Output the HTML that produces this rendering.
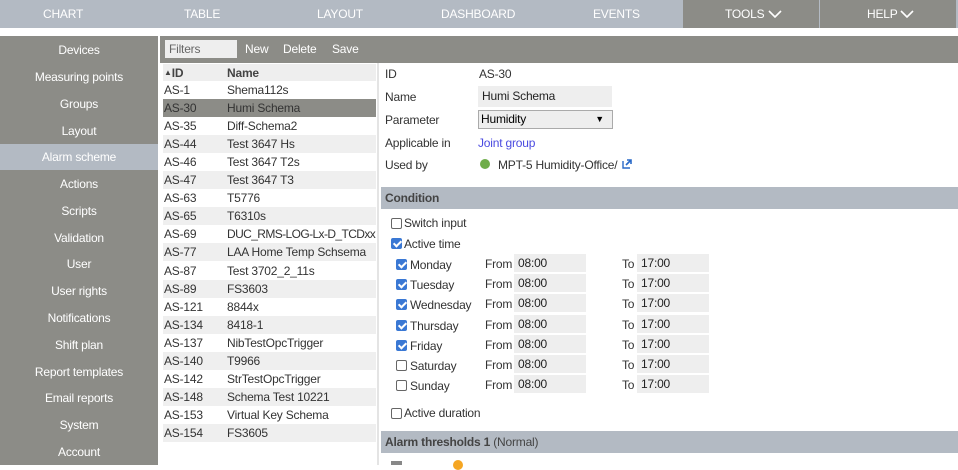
<!DOCTYPE html>
<html><head><meta charset="utf-8"><style>
*{margin:0;padding:0;box-sizing:border-box}
body{width:958px;height:465px;overflow:hidden;background:#fff;font-family:"Liberation Sans",sans-serif;font-size:12px;color:#333;position:relative;letter-spacing:-0.2px}
.a{position:absolute;white-space:nowrap}
.nav{left:0;top:0;width:958px;height:28px;background:#b3bac3}
.nav span{position:absolute;top:7px;color:#fff;font-size:12px}
.side{left:0;top:36px;width:158px;height:429px;background:#8c8c87}
.side div{position:absolute;left:0;width:158px;text-align:center;color:#fff;font-size:12px;height:26px;line-height:26px}
.tb{left:160px;top:36px;width:798px;height:27px;background:#8c8c87}
.row{position:absolute;left:163px;width:213px;height:18px;line-height:18px;white-space:nowrap;overflow:hidden}
.row span{position:absolute;white-space:nowrap}
.hdr{background:#b3bac3;font-weight:bold;color:#444;height:22px;line-height:22px;padding-left:4px}
.cb{position:absolute;width:11px;height:11px;border:1px solid #666;border-radius:2px;background:#fff}
.cb.on{background:#3a78d4;border-color:#3a78d4}
.cb.on:after{content:"";position:absolute;left:3px;top:0px;width:3px;height:6px;border:solid #fff;border-width:0 2px 2px 0;transform:rotate(45deg)}
.inp{position:absolute;background:#eee;height:18px;line-height:18px;padding-left:4px;color:#222}
</style></head><body>
<div class="a nav">
<span style="left:43px">CHART</span><span style="left:184px">TABLE</span><span style="left:317px">LAYOUT</span><span style="left:441px">DASHBOARD</span><span style="left:593px">EVENTS</span>
<div style="position:absolute;left:683px;top:0;width:136px;height:28px;background:#8c8c87"></div>
<div style="position:absolute;left:820px;top:0;width:136px;height:28px;background:#8c8c87"></div>
<span style="left:725px">TOOLS <svg width="14" height="8" viewBox="0 0 14 8"><path d="M1 1L7 7L13 1" stroke="#fff" stroke-width="1.6" fill="none"/></svg></span>
<span style="left:867px">HELP <svg width="14" height="8" viewBox="0 0 14 8"><path d="M1 1L7 7L13 1" stroke="#fff" stroke-width="1.6" fill="none"/></svg></span>
</div>
<div class="a side">
<div style="top:1px">Devices</div><div style="top:28px">Measuring points</div><div style="top:55px">Groups</div><div style="top:82px">Layout</div>
<div style="top:108px;background:#b3bac3">Alarm scheme</div><div style="top:135px">Actions</div><div style="top:162px">Scripts</div><div style="top:189px">Validation</div>
<div style="top:215px">User</div><div style="top:242px">User rights</div><div style="top:269px">Notifications</div><div style="top:296px">Shift plan</div>
<div style="top:323px">Report templates</div><div style="top:349px">Email reports</div><div style="top:376px">System</div><div style="top:403px">Account</div>
</div>
<div class="a tb">
<div style="position:absolute;left:5px;top:4px;width:72px;height:18px;background:#eee;color:#666;padding-left:4px;line-height:18px">Filters</div>
<span style="position:absolute;left:85px;top:6px;color:#fff">New</span><span style="position:absolute;left:123px;top:6px;color:#fff">Delete</span><span style="position:absolute;left:172px;top:6px;color:#fff">Save</span>
</div>
<div class="row" style="top:64px;background:#eee;font-weight:bold;color:#444"><span style="left:1px"><span style="position:static;font-size:8px;vertical-align:2px">▲</span>ID</span><span style="left:64px">Name</span></div>
<div id="list"></div>
<div class="a" style="left:377px;top:63px;width:2px;height:402px;background:#e4e4e4"></div>
<div class="a" style="left:385px;top:67px">ID</div><div class="a" style="left:479px;top:67px">AS-30</div>
<div class="a" style="left:385px;top:90px">Name</div><div class="inp" style="left:478px;top:86px;width:134px;height:21px;line-height:21px">Humi Schema</div>
<div class="a" style="left:385px;top:113px">Parameter</div>
<div class="a" style="left:478px;top:110px;width:135px;height:19px;border:1px solid #aaa;background:#eee;color:#000;padding-left:2px;line-height:17px">Humidity<span style="position:absolute;right:8px;top:0;font-size:9px">▼</span></div>
<div class="a" style="left:385px;top:136px">Applicable in</div><div class="a" style="left:478px;top:136px;color:#4a4ae0">Joint group</div>
<div class="a" style="left:385px;top:158px">Used by</div>
<div class="a" style="left:480px;top:159px;width:10px;height:10px;border-radius:50%;background:#6fad4a"></div>
<div class="a" style="left:498px;top:158px">MPT-5 Humidity-Office/</div>
<svg class="a" style="left:622px;top:159px" width="10" height="10" viewBox="0 0 10 10"><path d="M1 2V9H8" stroke="#2a6ac8" stroke-width="1.4" fill="none"/><path d="M4 6L9 1M5 1H9V5" stroke="#2a6ac8" stroke-width="1.6" fill="none"/></svg>
<div class="a hdr" style="left:381px;top:187px;width:577px">Condition</div>
<div class="cb" style="left:391px;top:218px"></div><div class="a" style="left:404px;top:216px">Switch input</div>
<div class="cb on" style="left:391px;top:238px"></div><div class="a" style="left:404px;top:237px">Active time</div>
<div id="days"></div>
<div class="cb" style="left:391px;top:408px"></div><div class="a" style="left:404px;top:406px">Active duration</div>
<div class="a hdr" style="left:381px;top:431px;width:577px">Alarm thresholds 1 <span style="font-weight:normal">(Normal)</span></div>
<div class="a" style="left:391px;top:461px;width:11px;height:4px;background:#888"></div>
<div class="a" style="left:453px;top:460px;width:10px;height:10px;border-radius:50%;background:#f5a623"></div>
<script>
var L=[["AS-1","Shema112s"],["AS-30","Humi Schema"],["AS-35","Diff-Schema2"],["AS-44","Test 3647 Hs"],["AS-46","Test 3647 T2s"],["AS-47","Test 3647 T3"],["AS-63","T5776"],["AS-65","T6310s"],["AS-69","DUC_RMS-LOG-Lx-D_TCDxx"],["AS-77","LAA Home Temp Schsema"],["AS-87","Test 3702_2_11s"],["AS-89","FS3603"],["AS-121","8844x"],["AS-134","8418-1"],["AS-137","NibTestOpcTrigger"],["AS-140","T9966"],["AS-142","StrTestOpcTrigger"],["AS-148","Schema Test 10221"],["AS-153","Virtual Key Schema"],["AS-154","FS3605"]];
var h="";L.forEach(function(r,i){var bg=i==1?"#8c8c87":(i%2?"#efefef":"#fff");h+='<div class="row" style="top:'+(81+i*18.05)+'px;background:'+bg+'"><span style="left:1px">'+r[0]+'</span><span style="left:64px;'+(i==8?'letter-spacing:-0.6px':'')+'">'+r[1]+'</span></div>'});
document.getElementById("list").innerHTML=h;
var D=["Monday","Tuesday","Wednesday","Thursday","Friday","Saturday","Sunday"];h="";
D.forEach(function(d,i){var y=254+i*20.2;h+='<div class="cb'+(i<5?' on':'')+'" style="left:396px;top:'+(y+5)+'px"></div><div class="a" style="left:410px;top:'+(y+4)+'px">'+d+'</div><div class="a" style="left:485px;top:'+(y+3)+'px">From</div><div class="inp" style="left:514px;top:'+y+'px;width:72px">08:00</div><div class="a" style="left:622px;top:'+(y+3)+'px">To</div><div class="inp" style="left:637px;top:'+y+'px;width:72px">17:00</div>'});
document.getElementById("days").innerHTML=h;
</script>
</body></html>
